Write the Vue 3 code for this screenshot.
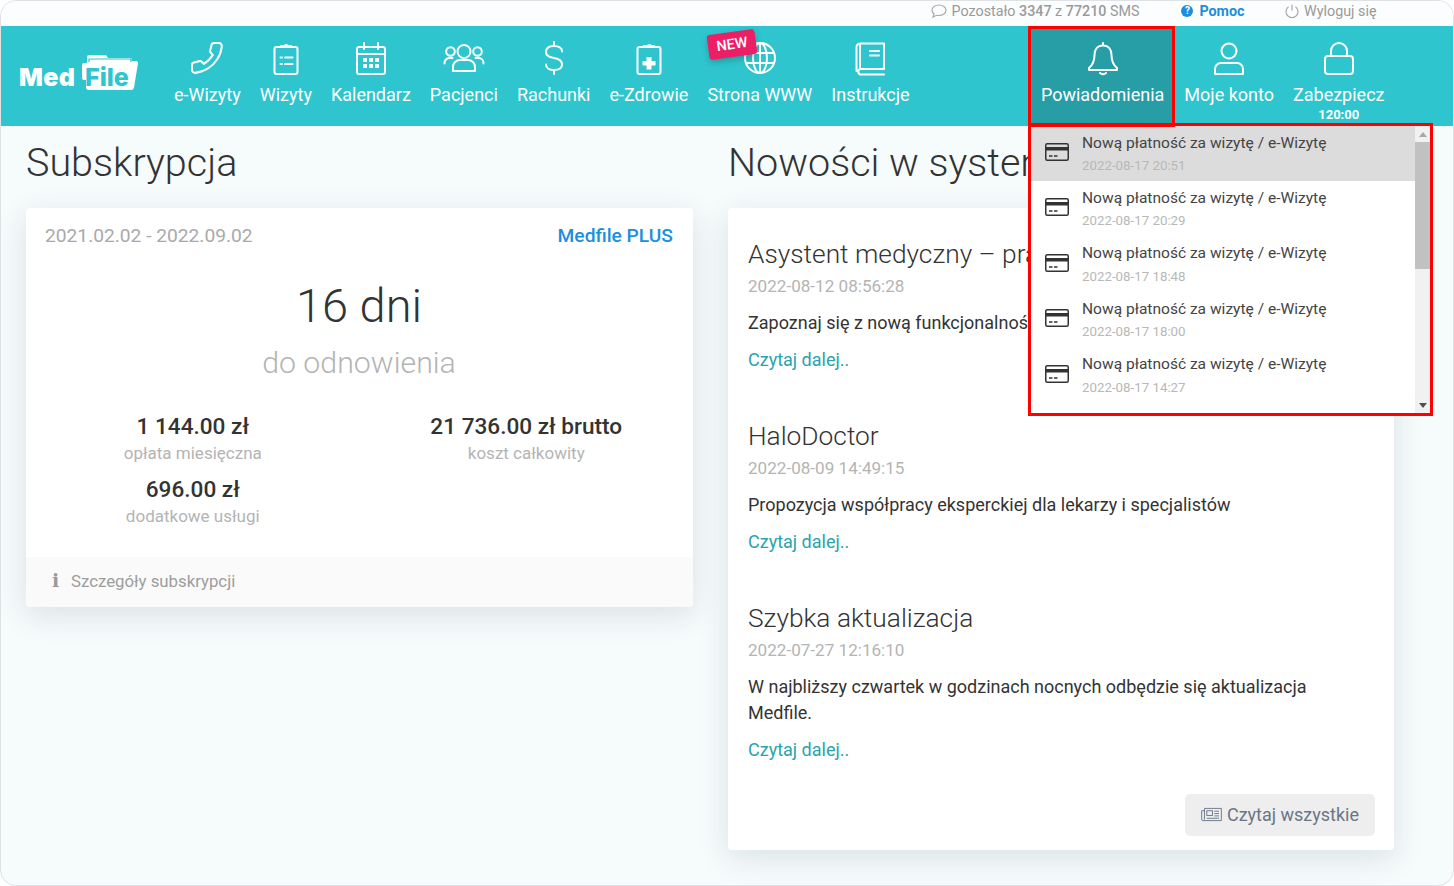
<script setup>
const leftNav = [
  { label: 'e-Wizyty', w: 36, svg: '<g transform="translate(36 0) scale(-1.5 1.5)"><path stroke-width="1.35" d="M22 16.92v3a2 2 0 0 1-2.18 2 19.79 19.79 0 0 1-8.63-3.07 19.5 19.5 0 0 1-6-6 19.79 19.79 0 0 1-3.07-8.67A2 2 0 0 1 4.11 2h3a2 2 0 0 1 2 1.72c.13.96.36 1.9.7 2.81a2 2 0 0 1-.45 2.11L8.09 9.91a16 16 0 0 0 6 6l1.27-1.27a2 2 0 0 1 2.11-.45c.91.34 1.85.57 2.81.7A2 2 0 0 1 22 16.92z"/></g>' },
  { label: 'Wizyty', w: 36, svg: '<rect x="6.500" y="7" width="23" height="27" rx="2"/><path d="M13 7V6h3.500a2 2 0 0 1 3.500 0H23v1M17 17.500h7.500M17 24h7.500M12.500 17.500h1.500M12.500 24h1.500"/>' },
  { label: 'Kalendarz', w: 36, svg: '<rect x="4" y="7" width="28" height="27" rx="2"/><path d="M4 14h28M11 3v6M25 3v6"/><path class="fill" d="M10 18h4v4h-4zM16 18h4v4h-4zM22 18h4v4h-4zM10 24h4v4h-4zM16 24h4v4h-4zM22 24h4v4h-4z"/>' },
  { label: 'Pacjenci', w: 42, svg: '<circle cx="21" cy="11.500" r="6.500"/><circle cx="7.500" cy="11.500" r="4.300"/><circle cx="34.500" cy="11.500" r="4.300"/><path d="M10 31v-4a7 7 0 0 1 7-7h8a7 7 0 0 1 7 7v4zM1.500 23.500v-.5a5 5 0 0 1 5-5h3M40.500 23.500v-.5a5 5 0 0 0-5-5h-3"/>' },
  { label: 'Rachunki', w: 36, svg: '<path d="M18 2v4M18 30v4M26 11.500c0-3.500-3.500-5.500-8-5.500s-8 2-8 6 3.500 5.300 8 6 8 2.500 8 6.500-3.500 5.500-8 5.500-8-2-8-5.500"/>' },
  { label: 'e-Zdrowie', w: 36, svg: '<rect x="6.500" y="7" width="23" height="27" rx="2"/><path d="M13 7V6h3.500a2 2 0 0 1 3.500 0H23v1"/><path class="fill" d="M15.500 17h5v4h4v4.500h-4v4h-5v-4h-4V21h4z"/>' },
  { label: 'Strona WWW', w: 36, badge: true, svg: '<circle cx="18" cy="18" r="15"/><ellipse cx="18" cy="18" rx="7" ry="15"/><path d="M18 3v30M4 13h28M4 23h28"/>' },
  { label: 'Instrukcje', w: 36, svg: '<path d="M8 28V3.500h24V29H8a3 3 0 0 0 0 5.500h24M4.500 31V7.500A4 4 0 0 1 8 3.500M18 11h9M18 15.500h9"/>' },
]
const rightNav = [
  { label: 'Powiadomienia', w: 36, active: true, svg: '<path d="M18 3v2.500M18 5.500c-5.500 0-8.500 4-8.500 9.500 0 7-2.500 10.500-5.500 13v2h28v-2c-3-2.500-5.500-6-5.500-13 0-5.500-3-9.500-8.500-9.500zM15 33c1.500 1.500 4.500 1.500 6 0"/>' },
  { label: 'Moje konto', w: 36, svg: '<circle cx="18" cy="11" r="7.500"/><path d="M4 34v-5a6 6 0 0 1 6-6h16a6 6 0 0 1 6 6v5z"/>' },
  { label: 'Zabezpiecz', w: 36, sub: '120:00', svg: '<rect x="4" y="16" width="28" height="18" rx="3"/><path d="M10 16V11a8 8 0 0 1 16 0v5"/>' },
]
const notifications = [
  { date: '2022-08-17 20:51', active: true },
  { date: '2022-08-17 20:29' },
  { date: '2022-08-17 18:48' },
  { date: '2022-08-17 18:00' },
  { date: '2022-08-17 14:27' },
]
const news = [
  { title: 'Asystent medyczny – praca w Medfile', date: '2022-08-12 08:56:28', text: 'Zapoznaj się z nową funkcjonalnością systemu Medfile.' },
  { title: 'HaloDoctor', date: '2022-08-09 14:49:15', text: 'Propozycja współpracy eksperckiej dla lekarzy i specjalistów' },
  { title: 'Szybka aktualizacja', date: '2022-07-27 12:16:10', text: 'W najbliższy czwartek w godzinach nocnych odbędzie się aktualizacja Medfile.' },
]
</script>

<template>
  <div class="frame">
    <header class="topbar">
      <span class="sms">
        <svg class="tiny" viewBox="0 0 16 16"><path d="M8 2c-3.900 0-7 2.300-7 5.200 0 1.500.8 2.800 2.100 3.700L2 14l3.600-1.700c.8.200 1.600.2 2.400.2 3.900 0 7-2.400 7-5.300S11.900 2 8 2z"/></svg>
        Pozostało <b>3347</b> z <b>77210</b> SMS
      </span>
      <span class="help">
        <span class="qmark">?</span>Pomoc
      </span>
      <span class="logout">
        <svg class="tiny" viewBox="0 0 16 16"><path d="M8 1.500v6M4.500 3.800a6 6 0 1 0 7 0"/></svg>
        Wyloguj się
      </span>
    </header>

    <nav class="nav">
      <div class="logo">
        <span class="med">Med</span>
        <span class="folder">
          <svg viewBox="0 0 58 38" width="58" height="38"><path class="folder-shape" d="M6 7V4a2 2 0 0 1 2-2h17l2 3h22a2 2 0 0 1 2 2v1h4a2 2 0 0 1 2 2.500l-4 24a3 3 0 0 1-3 2.500H8a3 3 0 0 1-3-3v-7H3a2 2 0 0 1-2-2V12a2 2 0 0 1 2-2h3z"/><path class="folder-line" d="M8 9V6h42v3"/></svg>
          <span class="file">File</span>
        </span>
      </div>
      <div class="nav-group">
        <div v-for="item in leftNav" :key="item.label" class="nav-item">
          <span v-if="item.badge" class="badge">NEW</span>
          <svg class="nav-icon" :width="item.w" height="36" :viewBox="`0 0 ${item.w} 36`" v-html="item.svg"></svg>
          <span class="nav-label">{{ item.label }}</span>
        </div>
      </div>
      <div class="nav-group right">
        <div v-for="item in rightNav" :key="item.label" class="nav-item" :class="{ active: item.active }">
          <svg class="nav-icon" :width="item.w" height="36" :viewBox="`0 0 ${item.w} 36`" v-html="item.svg"></svg>
          <span class="nav-label">{{ item.label }}</span>
          <span v-if="item.sub" class="nav-sub">{{ item.sub }}</span>
        </div>
      </div>
    </nav>

    <main class="main">
      <section class="col">
        <h1 class="heading">Subskrypcja</h1>
        <div class="card sub-card">
          <div class="sub-body">
            <div class="sub-head">
              <span class="range">2021.02.02 - 2022.09.02</span>
              <span class="plan">Medfile PLUS</span>
            </div>
            <div class="days">16 dni</div>
            <div class="renew">do odnowienia</div>
            <div class="stats">
              <div class="stat"><strong>1 144.00 zł</strong><span>opłata miesięczna</span></div>
              <div class="stat"><strong>21 736.00 zł brutto</strong><span>koszt całkowity</span></div>
              <div class="stat"><strong>696.00 zł</strong><span>dodatkowe usługi</span></div>
            </div>
          </div>
          <div class="sub-foot"><b class="info">i</b>Szczegóły subskrypcji</div>
        </div>
      </section>

      <section class="col">
        <h1 class="heading">Nowości w systemie</h1>
        <div class="card news-card">
          <article v-for="n in news" :key="n.title" class="news">
            <h2>{{ n.title }}</h2>
            <div class="news-date">{{ n.date }}</div>
            <p>{{ n.text }}</p>
            <a class="more">Czytaj dalej..</a>
          </article>
          <div class="news-foot">
            <button class="read-all">
              <svg viewBox="0 0 22 16" width="21" height="15"><path d="M3.500 1.500h18v13H2a1.500 1.500 0 0 1-1.500-1.500V4h3zM3.500 4v9.500"/><rect x="6" y="4" width="6" height="5"/><path d="M14 4.500h5M14 7h5M14 9.500h5M6 12h13"/></svg>
              Czytaj wszystkie
            </button>
          </div>
        </div>
      </section>
    </main>

    <div class="dropdown">
      <ul class="notes">
        <li v-for="(note, i) in notifications" :key="i" class="note" :class="{ current: note.active }">
          <svg class="card-icon" viewBox="0 0 24 18" width="24" height="18"><rect x="0.750" y="0.750" width="22.500" height="16.500" rx="1.500"/><path class="band" d="M1 4h22v3.500H1z"/><path d="M4 13h3.500M9 13h3.500"/></svg>
          <div class="note-text">
            <div class="note-title">Nową płatność za wizytę / e-Wizytę</div>
            <div class="note-date">{{ note.date }}</div>
          </div>
        </li>
      </ul>
      <div class="scrollbar">
        <i class="arrow up"></i>
        <div class="track"><div class="thumb"></div></div>
        <i class="arrow down"></i>
      </div>
    </div>

    <div class="mark mark-nav"></div>
    <div class="mark mark-list"></div>
  </div>
</template>

<style>
html, body { margin: 0; background: #fff; }
</style>

<style scoped>
.frame {
  position: relative;
  width: 1454px;
  height: 886px;
  box-sizing: border-box;
  overflow: hidden;
  border: 1px solid #dfe2e5;
  border-radius: 16px;
  background: #f6fbfc;
  font-family: Roboto, "Liberation Sans", sans-serif;
  color: #333;
}

.topbar {
  height: 25px;
  display: flex;
  align-items: center;
  padding: 0 0 5px 930px;
  box-sizing: border-box;
  background: #fbfdfe;
  font-size: 14.300px;
  color: #9a9a9a;
}
.tiny { width: 16px; height: 16px; fill: none; stroke: #aaa; stroke-width: 1.200; vertical-align: -3px; margin-right: 1px; }
.sms b { font-weight: 500; }
.help { margin-left: 42px; color: #1c8fdc; font-weight: 700; display: flex; align-items: center; }
.qmark { width: 12px; height: 12px; border-radius: 50%; background: #1c8fdc; color: #fff; font-size: 10px; line-height: 12px; text-align: center; margin-right: 6px; }
.logout { margin-left: 39px; }

.nav {
  height: 100px;
  display: flex;
  align-items: flex-start;
  background: #2ec5ce;
  color: #fff;
}
.logo { width: 139px; height: 100px; margin-left: 18px; margin-right: 6.500px; display: flex; align-items: flex-start; padding-top: 27px; box-sizing: border-box; flex: none; }
.med { font-family: Inter, "Liberation Sans", sans-serif; font-weight: 900; font-size: 25px; line-height: 48px; width: 62px; letter-spacing: .4px; }
.folder { position: relative; display: block; width: 58px; height: 38px; }
.folder svg { display: block; }
.folder-shape { fill: #fff; }
.folder-line { fill: none; stroke: #2ec5ce; stroke-width: 1.200; }
.file { position: absolute; left: 4px; top: 10px; font-family: Inter, "Liberation Sans", sans-serif; font-weight: 800; font-size: 25px; line-height: 28px; color: #2ec5ce; }

.nav-group { display: flex; }
.nav-group.right { margin-left: auto; margin-right: 59px; }
.nav-item { position: relative; height: 100px; box-sizing: border-box; padding: 14px 9.500px 0; display: flex; flex-direction: column; align-items: center; }
.nav-item.active { background: #279da5; padding-right: 10.500px; }
.nav-icon { display: block; fill: none; stroke: #fff; stroke-width: 2; stroke-linejoin: round; stroke-linecap: round; }
.nav-icon :deep(.fill) { fill: #fff; stroke: none; }
.nav-label { font-size: 18px; line-height: 24px; margin-top: 7px; white-space: nowrap; }
.nav-sub { font-size: 13px; font-weight: 700; line-height: 16px; }
.badge {
  position: absolute;
  left: 10px;
  top: 6px;
  width: 48px;
  height: 25px;
  border-radius: 3px;
  background: #ec1e66;
  box-shadow: 0 3px 6px rgba(0, 0, 0, .22);
  transform: rotate(-8deg);
  font-size: 14.500px;
  font-weight: 500;
  line-height: 25px;
  text-align: center;
  z-index: 1;
}

.main {
  display: grid;
  grid-template-columns: 667px 666px;
  column-gap: 35px;
  padding-left: 25px;
}
.heading {
  margin: 0;
  height: 82px;
  font-size: 39.500px;
  font-weight: 300;
  line-height: 74px;
  color: #333;
  white-space: nowrap;
}
.card { background: #fff; border-radius: 4px; box-shadow: 0 8px 30px rgba(40, 60, 70, .13); }

.sub-card { height: 399px; display: flex; flex-direction: column; overflow: hidden; }
.sub-body { flex: 1; padding: 16px 20px 0 19px; text-align: center; }
.sub-head { display: flex; justify-content: space-between; font-size: 19.200px; line-height: 24px; }
.range { color: #a9a9a9; }
.plan { color: #1c8fdc; font-weight: 500; }
.days { font-size: 47px; font-weight: 300; line-height: 60px; margin-top: 28px; color: #333; }
.renew { font-size: 30.300px; font-weight: 300; line-height: 40px; margin-top: 7px; color: #b4b4b4; }
.stats { display: grid; grid-template-columns: 1fr 1fr; margin: 29px -20px 0 -19px; row-gap: 10px; }
.stat { display: flex; flex-direction: column; }
.stat strong { font-size: 22.600px; font-weight: 500; line-height: 29px; color: #333; }
.stat span { font-size: 17px; line-height: 24px; color: #b4b4b4; }
.sub-foot { height: 50px; background: #fafafa; font-size: 16.800px; line-height: 46px; color: #9d9d9d; padding-left: 26px; }
.info { display: inline-block; width: 19px; font-family: "DejaVu Serif", serif; font-weight: 700; font-size: 19px; color: #999; }

.news-card { height: 642px; padding: 26px 20px 0; box-sizing: border-box; position: relative; }
.news { min-height: 182px; }
.news h2 { margin: 0; font-size: 26.300px; font-weight: 300; line-height: 40px; color: #333; white-space: nowrap; overflow: hidden; }
.news-date { font-size: 17.100px; line-height: 24px; color: #b4b4b4; }
.news p { margin: 11.500px 0 0; font-size: 18px; line-height: 26px; color: #333; max-width: 600px; }
.more { display: block; margin-top: 12.500px; font-size: 18px; line-height: 24px; color: #2ba3ae; }
.news-foot { position: absolute; right: 19px; bottom: 14px; }
.read-all {
  width: 190px;
  height: 42px;
  border: 0;
  border-radius: 5px;
  background: #eee;
  font-family: inherit;
  font-size: 18px;
  color: #6a7686;
  display: flex;
  align-items: center;
  justify-content: center;
  gap: 5px;
  padding: 0 0 2px;
}
.read-all svg { fill: none; stroke: #6a7686; stroke-width: 1; }

.dropdown {
  position: absolute;
  left: 1030px;
  top: 125px;
  width: 399px;
  height: 287px;
  display: flex;
  background: #fff;
  overflow: hidden;
}
.notes { list-style: none; margin: 0; padding: 0; flex: 1; }
.note { height: 55.400px; display: flex; box-sizing: border-box; padding: 5.500px 0 0 14px; }
.note.current { background: #dcdcdc; }
.card-icon { flex: none; margin: 11.500px 13px 0 0; fill: none; stroke: #333; stroke-width: 1.500; }
.band { fill: #333; stroke: none; }
.note-title { font-size: 15.550px; line-height: 22px; color: #444; white-space: nowrap; }
.note-date { font-size: 13.300px; line-height: 22px; margin-top: 1.500px; color: #b8b8b8; }
.scrollbar { width: 15px; flex: none; background: #f1f1f1; display: flex; flex-direction: column; align-items: center; }
.arrow { width: 0; height: 0; border-left: 4px solid transparent; border-right: 4px solid transparent; flex: none; }
.arrow.up { border-bottom: 5px solid #a8a8a8; margin: 6px 0 5px; }
.arrow.down { border-top: 5px solid #505050; margin: 5px 0 5px; }
.track { flex: 1; width: 100%; }
.thumb { height: 127px; background: #c1c1c1; }

.mark { position: absolute; box-sizing: border-box; border: 3px solid #ff0000; pointer-events: none; }
.mark-nav { left: 1027px; top: 25px; width: 147px; height: 101px; }
.mark-list { left: 1027px; top: 122px; width: 405px; height: 293px; }
</style>
